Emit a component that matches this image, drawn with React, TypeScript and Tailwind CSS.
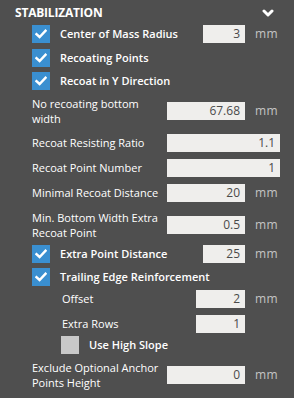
import React from "react";

const font = { fontFamily: '"Open Sans", "Noto Sans", sans-serif' };

function Check() {
  return (
    <div className="w-[18px] h-[18px] bg-[#3a8fd0] flex items-center justify-center shrink-0">
      <svg width="12" height="10" viewBox="0 0 12 10">
        <path d="M1.5 5.2 L4.6 8 L10.5 1.8" fill="none" stroke="#fff" strokeWidth="2.4" strokeLinecap="square" />
      </svg>
    </div>
  );
}

function Input({ value, w }: { value: string; w: string }) {
  return (
    <div className={`${w} h-[18px] bg-[#efeeec] text-[#4a4a4a] text-[12px] leading-[18px] text-right pr-[5px] shrink-0`}>
      {value}
    </div>
  );
}

function Unit({ show = true }: { show?: boolean }) {
  return (
    <div className="w-[35px] shrink-0 pl-[10px] text-[12px] text-[#c4c4c4] leading-[18px] tracking-[0.5px]">
      {show ? "mm" : ""}
    </div>
  );
}

export default function App() {
  return (
    <div className="w-[294px] h-[398px] bg-[#4f4f4f] text-white overflow-hidden" style={font}>
      <div className="flex items-center justify-between pl-[15px] pr-[20px] pt-[5px] h-[20px]">
        <span className="text-[12px] font-bold leading-[15px] tracking-[-0.2px]">STABILIZATION</span>
        <svg width="12" height="8" viewBox="0 0 12 8">
          <path d="M2 2 L6 6 L10 2" fill="none" stroke="#fff" strokeWidth="3" strokeLinecap="round" strokeLinejoin="round" />
        </svg>
      </div>

      <div className="pl-[32px] pr-[14px] text-[11px]">
        {/* R1 */}
        <div className="mt-[5px] h-[18px] flex items-center">
          <Check />
          <span className="ml-[10px] flex-1 font-semibold">Center of Mass Radius</span>
          <Input value="3" w="w-[42px]" />
          <Unit />
        </div>
        {/* R2 */}
        <div className="mt-[6px] h-[18px] flex items-center">
          <Check />
          <span className="ml-[10px] font-semibold">Recoating Points</span>
        </div>
        {/* R3 */}
        <div className="mt-[5px] h-[18px] flex items-center">
          <Check />
          <span className="ml-[10px] font-semibold">Recoat in Y Direction</span>
        </div>
        {/* R4 */}
        <div className="mt-[6px] h-[30px] flex items-center">
          <span className="flex-1 leading-[15px] pr-[6px]">No recoating bottom width</span>
          <Input value="67.68" w="w-[78px]" />
          <Unit />
        </div>
        {/* R5 */}
        <div className="mt-[8px] h-[18px] flex items-center">
          <span className="flex-1">Recoat Resisting Ratio</span>
          <Input value="1.1" w="w-[113px]" />
        </div>
        {/* R6 */}
        <div className="mt-[7px] h-[18px] flex items-center">
          <span className="flex-1">Recoat Point Number</span>
          <Input value="1" w="w-[113px]" />
        </div>
        {/* R7 */}
        <div className="mt-[7px] h-[18px] flex items-center">
          <span className="flex-1 whitespace-nowrap">Minimal Recoat Distance</span>
          <Input value="20" w="w-[78px]" />
          <Unit />
        </div>
        {/* R8 */}
        <div className="mt-[8px] h-[30px] flex items-center">
          <span className="flex-1 leading-[15px] pr-[4px]">Min. Bottom Width Extra Recoat Point</span>
          <Input value="0.5" w="w-[78px]" />
          <Unit />
        </div>
        {/* R9 */}
        <div className="mt-[5px] h-[18px] flex items-center">
          <Check />
          <span className="ml-[10px] flex-1 font-semibold">Extra Point Distance</span>
          <Input value="25" w="w-[42px]" />
          <Unit />
        </div>
        {/* R10 */}
        <div className="mt-[5px] h-[18px] flex items-center">
          <Check />
          <span className="ml-[10px] font-semibold whitespace-nowrap">Trailing Edge Reinforcement</span>
        </div>
        {/* R11 */}
        <div className="mt-[4px] h-[18px] flex items-center pl-[30px]">
          <span className="flex-1">Offset</span>
          <Input value="2" w="w-[49px]" />
          <Unit />
        </div>
        {/* R12 */}
        <div className="mt-[7px] h-[18px] flex items-center pl-[30px]">
          <span className="flex-1">Extra Rows</span>
          <Input value="1" w="w-[49px]" />
          <Unit show={false} />
        </div>
        {/* R13 */}
        <div className="mt-[3px] h-[18px] flex items-center pl-[29px]">
          <div className="w-[18px] h-[18px] bg-[#c8c8c8] shrink-0" />
          <span className="ml-[10px] font-semibold">Use High Slope</span>
        </div>
        {/* R14 */}
        <div className="mt-[6px] h-[30px] flex items-center">
          <span className="flex-1 leading-[15px] pr-[4px]">Exclude Optional Anchor Points Height</span>
          <Input value="0" w="w-[78px]" />
          <Unit />
        </div>
      </div>
    </div>
  );
}
